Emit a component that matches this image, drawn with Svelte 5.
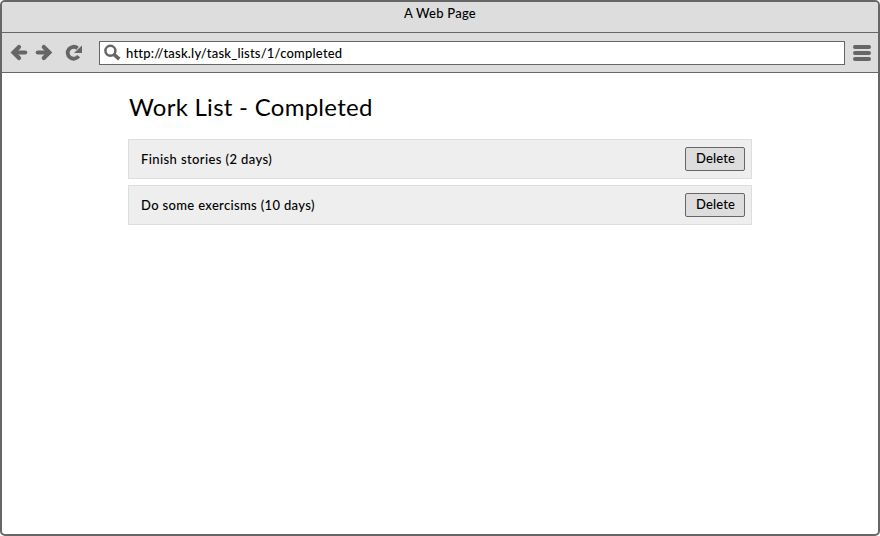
<script>
  const tasks = [
    { name: 'Finish stories', days: 2, tracking: 0.4 },
    { name: 'Do some exercisms', days: 10, tracking: 0.34 },
  ];
</script>

<div class="window">
  <header class="title">A Web Page</header>
  <nav class="toolbar">
    <svg class="nav" width="88" height="39" viewBox="0 0 88 39" aria-hidden="true">
      <g fill="none" stroke="#666" stroke-width="4.2">
        <path d="M23.2 19.5H12" stroke-linecap="round" />
        <path d="M17 14L11.5 19.5L17 25" stroke-linecap="round" />
        <path d="M35.8 19.5H47" stroke-linecap="round" />
        <path d="M41.8 14L47.3 19.5L41.8 25" stroke-linecap="round" />
        <path d="M76.6 23.2A6 6 0 1 1 75.6 15.2" stroke-width="3.8" />
      </g>
      <path d="M80 12.5V20H72Z" fill="#666" />
    </svg>
    <div class="address">
      <svg width="18" height="18" viewBox="0 0 18 18" aria-hidden="true">
        <circle cx="6.4" cy="6.8" r="5" fill="none" stroke="#666" stroke-width="2.5" />
        <path d="M10.2 10.6L15.3 15.1" stroke="#666" stroke-width="3.6" />
      </svg>
      <span>http://task.ly/task_lists/1/completed</span>
    </div>
    <div class="menu"><i></i><i></i><i></i></div>
  </nav>
  <main>
    <h1>Work List - Completed</h1>
    <ul>
      {#each tasks as task}
        <li>
          <span style="letter-spacing: {task.tracking}px">{task.name} ({task.days} days)</span>
          <button>Delete</button>
        </li>
      {/each}
    </ul>
  </main>
</div>

<style>
  .window {
    box-sizing: border-box;
    width: 880px;
    height: 536px;
    border: 2px solid #666;
    border-radius: 5px;
    overflow: hidden;
    background: #fff;
    color: #000;
    font: 500 13px/18px Lato, sans-serif;
  }
  .title {
    box-sizing: border-box;
    height: 31px;
    padding-top: 2px;
    text-align: center;
    letter-spacing: 0.25px;
    background: #ddd;
    border-bottom: 1px solid #666;
  }
  .toolbar {
    box-sizing: border-box;
    height: 40px;
    display: flex;
    align-items: center;
    background: #ddd;
    border-bottom: 1px solid #666;
  }
  .nav { flex: none; margin-right: 9px; }
  .address {
    box-sizing: border-box;
    flex: none;
    width: 746px;
    height: 24px;
    display: flex;
    align-items: center;
    padding-left: 4px;
    border: 1px solid #666;
    background: #fff;
    letter-spacing: 0.21px;
  }
  .address span { margin-left: 4px; }
  .menu {
    display: flex;
    flex-direction: column;
    gap: 2px;
    margin-left: 8px;
  }
  .menu i {
    width: 18px;
    height: 4px;
    border-radius: 2px;
    background: #666;
  }
  main { width: 624px; margin: 18px 0 0 126px; }
  h1 {
    margin: 0 0 16px;
    font-size: 24px;
    font-weight: 400;
    line-height: 32px;
    letter-spacing: 0.27px;
    text-indent: 1px;
  }
  ul { display: grid; gap: 6px; margin: 0; padding: 0; list-style: none; }
  li {
    box-sizing: border-box;
    height: 40px;
    display: flex;
    align-items: center;
    justify-content: space-between;
    padding: 0 6px 0 12px;
    border: 1px solid #ddd;
    background: #eee;
  }
  button {
    box-sizing: border-box;
    width: 60px;
    height: 24px;
    padding: 0 0 2px 1px;
    border: 1px solid #666;
    border-radius: 2px;
    background: #ddd;
    color: #000;
    font: 500 13px/20px Lato, sans-serif;
    letter-spacing: 0.15px;
  }
</style>
